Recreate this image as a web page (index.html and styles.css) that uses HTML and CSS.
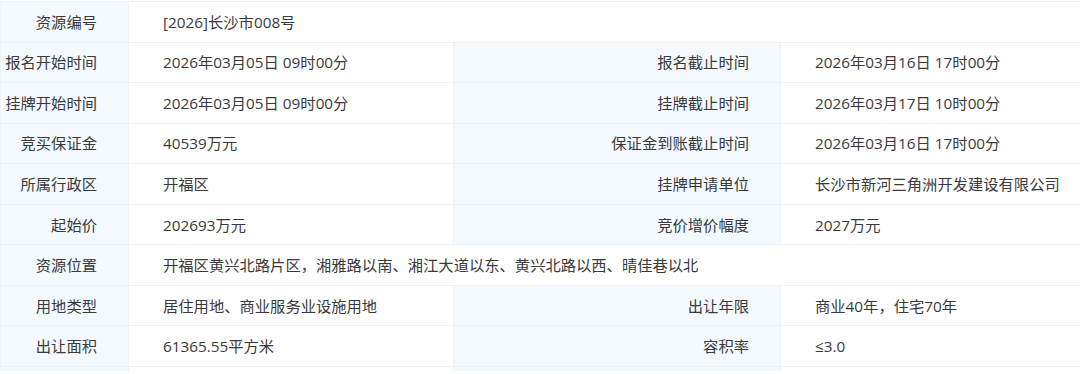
FILE: index.html
```html
<!DOCTYPE html>
<html lang="zh-CN">
<head>
<meta charset="utf-8">
<title>资源信息</title>
<link rel="stylesheet" href="styles.css">
</head>
<body>
<table class="info">
  <colgroup>
    <col class="c1"><col class="c2"><col class="c3"><col class="c4">
  </colgroup>
  <tr><th>资源编号</th><td colspan="3">[2026]长沙市008号</td></tr>
  <tr><th>报名开始时间</th><td>2026年03月05日 09时00分</td><th>报名截止时间</th><td>2026年03月16日 17时00分</td></tr>
  <tr><th>挂牌开始时间</th><td>2026年03月05日 09时00分</td><th>挂牌截止时间</th><td>2026年03月17日 10时00分</td></tr>
  <tr><th>竞买保证金</th><td>40539万元</td><th>保证金到账截止时间</th><td>2026年03月16日 17时00分</td></tr>
  <tr><th>所属行政区</th><td>开福区</td><th>挂牌申请单位</th><td>长沙市新河三角洲开发建设有限公司</td></tr>
  <tr><th>起始价</th><td>202693万元</td><th>竞价增价幅度</th><td>2027万元</td></tr>
  <tr><th>资源位置</th><td colspan="3">开福区黄兴北路片区，湘雅路以南、湘江大道以东、黄兴北路以西、晴佳巷以北</td></tr>
  <tr><th>用地类型</th><td>居住用地、商业服务业设施用地</td><th>出让年限</th><td>商业40年，住宅70年</td></tr>
  <tr><th>出让面积</th><td>61365.55平方米</td><th>容积率</th><td>≤3.0</td></tr>
  <tr class="tail"><th></th><td></td><th></th><td></td></tr>
</table>
</body>
</html>
```
FILE: styles.css
```css
html, body {
  margin: 0;
  padding: 0;
  background: #ffffff;
}
body {
  font-family: "Open Sans", "Noto Sans CJK SC", sans-serif;
  font-size: 15.3px;
  color: #3a3a3a;
  overflow: hidden;
  height: 374px;
}
.info {
  width: 1080px;
  border-collapse: collapse;
  table-layout: fixed;
  margin-top: 1px;
}
.c1 { width: 128px; }
.c2 { width: 325px; }
.c3 { width: 327px; }
.c4 { width: 300px; }
.info th, .info td {
  height: 39.56px;
  padding: 0;
  border-top: 1px solid #eef0f2;
  border-bottom: 1px solid #eef0f2;
  vertical-align: middle;
  white-space: nowrap;
  line-height: 20px;
}
.info th {
  background: #f3f9fd;
  font-weight: normal;
  text-align: right;
  padding-right: 31px;
  border-left: 1px solid #eef3f6;
  border-right: 1px solid #eef3f6;
}
.info td {
  text-align: left;
  padding-left: 34px;
}
.info .tail th, .info .tail td {
  height: 4px;
  line-height: 4px;
  border-bottom: none;
}
```
